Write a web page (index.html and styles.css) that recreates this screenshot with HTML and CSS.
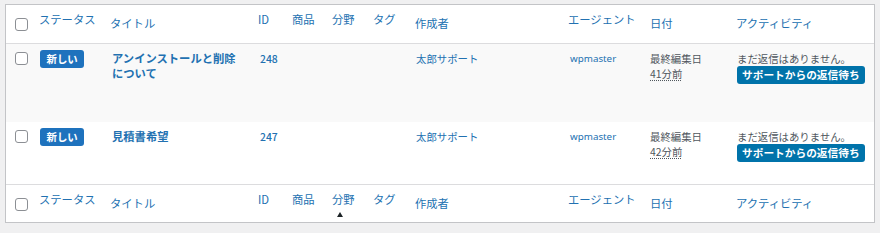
FILE: index.html
```html
<!DOCTYPE html>
<html lang="ja">
<head>
<meta charset="utf-8">
<title>チケット一覧</title>
<link rel="stylesheet" href="styles.css">
</head>
<body>
<table class="list">
  <colgroup>
    <col class="c-cb"><col class="c-status"><col class="c-title"><col class="c-id"><col class="c-product"><col class="c-field"><col class="c-tag"><col class="c-author"><col class="c-agent"><col class="c-date"><col class="c-activity">
  </colgroup>
  <thead>
    <tr>
      <th class="cb"><span class="box"></span></th>
      <th class="plain">ステータス</th>
      <th class="sort">タイトル</th>
      <th class="plain">ID</th>
      <th class="plain">商品</th>
      <th class="plain">分野</th>
      <th class="plain">タグ</th>
      <th class="sort">作成者</th>
      <th class="plain">エージェント</th>
      <th class="sort">日付</th>
      <th class="sort">アクティビティ</th>
    </tr>
  </thead>
  <tbody>
    <tr class="r1 alt">
      <td class="cb"><span class="box"></span></td>
      <td class="status"><span class="badge">新しい</span></td>
      <td class="title"><a class="row-title">アンインストールと削除について</a></td>
      <td class="id">248</td>
      <td></td>
      <td></td>
      <td></td>
      <td class="author"><a>太郎サポート</a></td>
      <td class="agent"><a>wpmaster</a></td>
      <td class="date">最終編集日<br><span class="ago">41分前</span></td>
      <td class="activity"><div class="note">まだ返信はありません。</div><span class="btn">サポートからの返信待ち</span></td>
    </tr>
    <tr class="r2">
      <td class="cb"><span class="box"></span></td>
      <td class="status"><span class="badge">新しい</span></td>
      <td class="title"><a class="row-title">見積書希望</a></td>
      <td class="id">247</td>
      <td></td>
      <td></td>
      <td></td>
      <td class="author"><a>太郎サポート</a></td>
      <td class="agent"><a>wpmaster</a></td>
      <td class="date">最終編集日<br><span class="ago">42分前</span></td>
      <td class="activity"><div class="note">まだ返信はありません。</div><span class="btn">サポートからの返信待ち</span></td>
    </tr>
  </tbody>
  <tfoot>
    <tr>
      <th class="cb"><span class="box"></span></th>
      <th class="plain">ステータス</th>
      <th class="sort">タイトル</th>
      <th class="plain">ID</th>
      <th class="plain">商品</th>
      <th class="plain">分野<span class="arrow"></span></th>
      <th class="plain">タグ</th>
      <th class="sort">作成者</th>
      <th class="plain">エージェント</th>
      <th class="sort">日付</th>
      <th class="sort">アクティビティ</th>
    </tr>
  </tfoot>
</table>
</body>
</html>
```
FILE: styles.css
```css
* { box-sizing: border-box; }
html, body { margin: 0; background: #f0f0f1; }
body {
  padding: 4px 5px;
  font-family: "Noto Sans CJK JP", "Noto Sans", sans-serif;
  color: #50575e;
}
.list {
  width: 870px;
  table-layout: fixed;
  border-collapse: separate;
  border-spacing: 0;
  border: 1px solid #c3c4c7;
  background: #fff;
}
.c-cb { width: 33px; }
.c-status { width: 71px; }
.c-title { width: 148px; }
.c-id { width: 34px; }
.c-product { width: 40px; }
.c-field { width: 41px; }
.c-tag { width: 42px; }
.c-author { width: 153px; }
.c-agent { width: 82px; }
.c-date { width: 86px; }
.c-activity { width: 138px; }

th {
  padding: 0;
  text-align: left;
  vertical-align: top;
  font-weight: 400;
  font-size: 11.3px;
  line-height: 15px;
  color: #2271b1;
  white-space: nowrap;
}
th.plain { padding-top: 7px; }
th.sort { padding-top: 11px; }
th.cb { padding: 13px 0 0 9px; }
thead tr { height: 39px; }
thead th { border-bottom: 1px solid #dcdcde; }
tfoot tr { height: 38px; }
tfoot th { border-top: 1px solid #dcdcde; }

.box {
  display: block;
  width: 13px;
  height: 13px;
  border: 1px solid #8c8f94;
  border-radius: 3px;
  background: #fff;
}
.arrow {
  display: block;
  width: 0;
  height: 0;
  margin: 5px 0 0 5px;
  border-left: 3px solid transparent;
  border-right: 3px solid transparent;
  border-bottom: 5px solid #1d2327;
}

td {
  padding: 7px 0 0;
  vertical-align: top;
  font-size: 10.4px;
  line-height: 15px;
  color: #50575e;
}
tr.alt td { background: #f9f9f9; }
tr.r1 { height: 78px; }
tr.r2 { height: 62px; }
td a { color: #2271b1; text-decoration: none; }
td.cb { padding: 8px 0 0 9px; }
td.status { padding: 6px 0 0 1px; }
.badge {
  display: inline-block;
  padding: 0 6.5px;
  border-radius: 3px;
  background: #1e72bd;
  color: #fff;
  font-weight: 700;
  font-size: 10.4px;
  line-height: 18px;
  white-space: nowrap;
}
td.title { padding: 7px 12px 0 2px; }
.row-title { font-weight: 700; font-size: 11.3px; }
td.id { padding-left: 2px; font-weight: 500; color: #2271b1; }
td.author { padding-left: 1px; }
td.agent { padding-left: 2px; font-family: "Noto Sans", sans-serif; font-size: 9.8px; font-weight: 400; }
td.date { white-space: nowrap; }
.ago { text-decoration: underline dotted; text-underline-offset: 2px; }
td.activity { padding-left: 1px; }
.note { white-space: nowrap; }
.btn {
  display: inline-block;
  padding: 0 5px;
  border-radius: 3px;
  background: #0073aa;
  color: #fff;
  font-weight: 700;
  font-size: 10.7px;
  line-height: 18px;
  white-space: nowrap;
}
```
